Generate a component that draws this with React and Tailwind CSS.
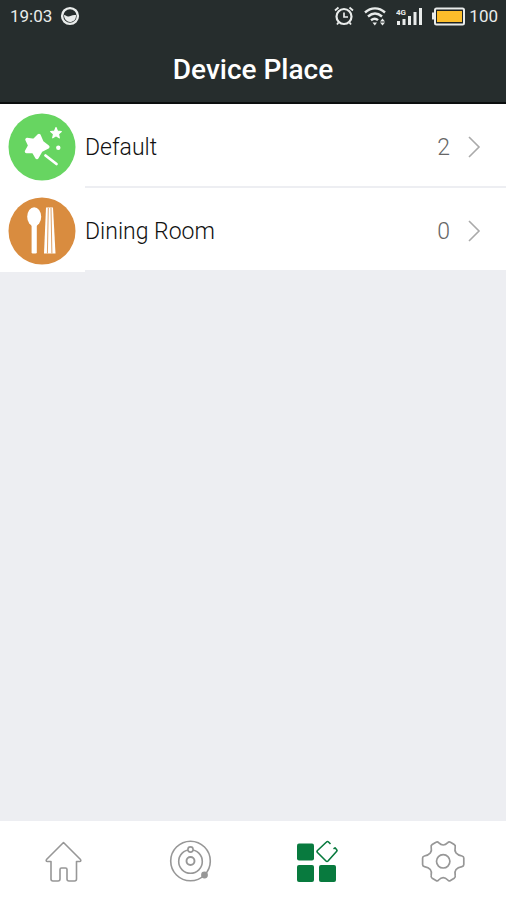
import { useState } from 'react';

function MagicIcon() {
  return (
    <svg viewBox="0 0 68 68" className="size-[68px]" aria-hidden="true">
      <circle cx="34" cy="34" r="33.5" fill="#67d561" />
      <g fill="#fff" stroke="#fff" strokeLinejoin="round">
        <path strokeWidth="3.5" d="M31 22.5L34 29.5L39.8 34L33 37.5L29 44.5L25.5 38.5L18.5 38.5L21.8 32.5L19 26.5L26 27.5z" />
        <path strokeWidth="1.2" d="M48 14.5L49.5 18.2L53.3 18.5L50.4 21L51.3 24.8L48 22.8L44.7 24.8L45.6 21L42.7 18.5L46.5 18.2z" />
      </g>
      <circle cx="50.3" cy="34.7" r="2.2" fill="#fff" />
      <path d="M37.5 42.5L48.5 51" stroke="#fff" strokeWidth="2.8" strokeLinecap="round" />
    </svg>
  );
}

function DiningIcon() {
  return (
    <svg viewBox="0 0 68 68" className="size-[68px]" aria-hidden="true">
      <circle cx="34" cy="34" r="33.5" fill="#d98c3f" />
      <g fill="#fff">
        <ellipse cx="26.2" cy="19.8" rx="7" ry="9.6" />
        <rect x="23.6" y="26" width="5.2" height="30.5" rx="1.2" />
        <path d="M38 10.5h7L47.5 56.500H36z" />
      </g>
      <path d="M40.300 11l-.9 45.500M43 11l.9 45.500" stroke="#e0a063" strokeWidth="1" />
    </svg>
  );
}

function HomeIcon() {
  return (
    <svg viewBox="0 0 44 44" className="size-11" fill="none" stroke="currentColor" strokeWidth="1.6" strokeLinejoin="round" aria-hidden="true">
      <path d="M22.500 3.500L5.500 20.500q-1 2 1 2H10V40q0 2 2 2h5q2 0 2-2V30.500q0-1.500 1.500-1.500h4q1.500 0 1.500 1.500V40q0 2 2 2H33.500q2 0 2-2V22.500h3q2 0 1-2z" />
    </svg>
  );
}

function OrbitIcon() {
  return (
    <svg viewBox="0 0 44 44" className="size-11" fill="none" stroke="currentColor" strokeWidth="1.6" aria-hidden="true">
      <circle cx="22.500" cy="22" r="19.800" />
      <circle cx="22.500" cy="22.500" r="11.800" />
      <circle cx="22.500" cy="22" r="4" strokeWidth="1.900" />
      <circle cx="22.500" cy="10.500" r="2.600" fill="#fff" />
      <circle cx="36.500" cy="36" r="2.600" fill="currentColor" />
    </svg>
  );
}

function PlacesIcon() {
  return (
    <svg viewBox="0 0 44 44" className="size-11" fill="currentColor" aria-hidden="true">
      <rect x="3" y="4.500" width="17" height="17" rx="2" />
      <rect x="3" y="26" width="17" height="17" rx="2" />
      <rect x="25" y="26" width="17" height="17" rx="2" />
      <path
        fill="none"
        stroke="currentColor"
        strokeWidth="1.600"
        strokeLinejoin="round"
        d="M36.500 5L34.500 3Q33.500 2 32.500 3L23.500 11.500Q22.500 12.500 23.500 13.500L32 22Q33 23 34 22L42.500 12.500Q43.500 11.500 42.500 10.500L41 8.800L39.500 9.800"
      />
    </svg>
  );
}

function SettingsIcon() {
  return (
    <svg viewBox="0 0 44 44" className="size-11" fill="none" stroke="currentColor" strokeWidth="1.700" strokeLinejoin="round" aria-hidden="true">
      <path d="M15 3.200Q16.500 2.200 17.600 3.600Q22.200 8.400 26.800 3.600Q28 2.200 29.500 3.200L33.200 5.500Q34.700 6.500 34.200 8.300Q32.500 15.500 41 17Q42.800 17.300 42.800 19V25.500Q42.800 27.300 41 27.600Q32.500 29 34.200 36.300Q34.700 38.200 33.200 39.200L29.500 41.500Q28 42.500 26.800 41Q22.200 36.400 17.600 41Q16.500 42.500 15 41.500L11.200 39.200Q9.700 38.200 10.200 36.300Q11.800 29 3.400 27.600Q1.600 27.300 1.600 25.500V19Q1.600 17.300 3.400 17Q11.800 15.500 10.200 8.300Q9.700 6.500 11.200 5.500z" />
      <circle cx="22.200" cy="22.300" r="6.700" />
    </svg>
  );
}

function StatusBar() {
  return (
    <div className="flex h-8 items-center justify-between pl-[10px] pr-2 text-[17px] leading-8 text-[#e9eceb]">
      <div className="flex items-center gap-2">
        <span>19:03</span>
        <svg viewBox="0 0 20 20" className="size-5" aria-hidden="true">
          <circle cx="10" cy="10" r="7.900" fill="none" stroke="currentColor" strokeWidth="2.400" />
          <path d="M4 9c2 0 2.500 1.800 4.500 1.500S12 8.500 16 9c.3 5-3 7-6 7s-6-3-6-7z" fill="currentColor" />
        </svg>
      </div>
      <div className="flex items-center">
        <svg viewBox="0 0 20 20" className="mr-[10px] size-5" fill="none" stroke="currentColor" strokeWidth="2.200" aria-hidden="true">
          <circle cx="10" cy="10.500" r="7.500" />
          <path d="M10 6.500v4.500h4" strokeWidth="1.700" />
          <path d="M1 4.500L4.500 1.500M19 4.500L15.500 1.500M4.500 16.500L3 18.500M15.500 16.500l1.500 2" strokeWidth="1.800" />
        </svg>
        <svg viewBox="0 0 22 20" className="mr-2.5 h-5 w-[22px]" fill="none" stroke="currentColor" strokeWidth="2.400" aria-hidden="true">
          <path d="M1 6.500c6-5.500 14-5.500 20 0M4 10.500c4.500-4 9.500-4 14 0M7 14.200c2.500-2 5-2 7 0" />
          <path d="M8.500 16.500h4.500l-2.200 3zM16 16.500h5l-2.500 3zM16 15.500l2.500-3 2.500 3z" fill="currentColor" stroke="none" />
        </svg>
        <svg viewBox="0 0 27 20" className="mr-2 h-5 w-[27px]" fill="currentColor" aria-hidden="true">
          <path d="M1 15h3v4H1zM6.500 13h3v6h-3zM12 10h3v9h-3zM17.500 6h3v13h-3zM23 2h3v17h-3z" />
          <text x="0" y="9" fontSize="8" fontWeight="700">4G</text>
        </svg>
        <svg viewBox="0 0 34 20" className="mr-1 h-5 w-[34px]" aria-hidden="true">
          <rect x="4" y="2.500" width="29" height="16" rx="1.500" fill="#1d2222" stroke="currentColor" strokeWidth="2" />
          <path d="M3.500 6.500H1v7h2.500" fill="currentColor" />
          <rect x="6" y="5" width="25" height="11" fill="#fcbd2b" />
        </svg>
        <span>100</span>
      </div>
    </div>
  );
}

const places = [
  { name: 'Default', count: 2, Icon: MagicIcon },
  { name: 'Dining Room', count: 0, Icon: DiningIcon },
];

const tabs = [
  { id: 'home', label: 'Home', Icon: HomeIcon },
  { id: 'scenes', label: 'Scenes', Icon: OrbitIcon },
  { id: 'places', label: 'Places', Icon: PlacesIcon },
  { id: 'settings', label: 'Settings', Icon: SettingsIcon },
];

function PlaceRow({ place }) {
  const { name, count, Icon } = place;
  return (
    <li>
      <button type="button" className="flex h-[84px] w-full items-stretch bg-white text-left">
        <span className="flex w-[85px] shrink-0 items-center pl-2 pt-0.5">
          <Icon />
        </span>
        <span className="flex flex-1 items-center border-b-2 border-[#edeef2] pr-6 pt-1.5 text-[23px] font-light leading-7 text-[#111]">
          <span className="flex-1">{name}</span>
          <span className="mr-4 text-[#666]">{count}</span>
          <svg viewBox="0 0 16 24" className="h-6 w-4" fill="none" stroke="#aaa" strokeWidth="1.600" aria-hidden="true">
            <path d="M3 1l10 10L3 21" />
          </svg>
        </span>
      </button>
    </li>
  );
}

function App() {
  const [activeTab, setActiveTab] = useState('places');

  return (
    <div className="flex min-h-screen flex-col bg-[#edeef2] font-['Roboto',sans-serif]">
      <header className="border-b-2 border-[#0b0e0e] bg-[#262d2d]">
        <StatusBar />
        <h1 className="pb-[14px] pt-5 text-center text-[28px] font-medium leading-9 text-white">
          Device Place
        </h1>
      </header>

      <main className="flex-1">
        <ul>
          {places.map((place) => (
            <PlaceRow key={place.name} place={place} />
          ))}
        </ul>
      </main>

      <nav className="grid h-[79px] grid-cols-4 bg-white">
        {tabs.map(({ id, label, Icon }) => (
          <button
            key={id}
            type="button"
            aria-label={label}
            aria-current={activeTab === id ? 'page' : undefined}
            onClick={() => setActiveTab(id)}
            className={`flex items-center justify-center ${activeTab === id ? 'text-[#087a3e]' : 'text-[#979797]'}`}
          >
            <Icon />
          </button>
        ))}
      </nav>
    </div>
  );
}

export default App;
